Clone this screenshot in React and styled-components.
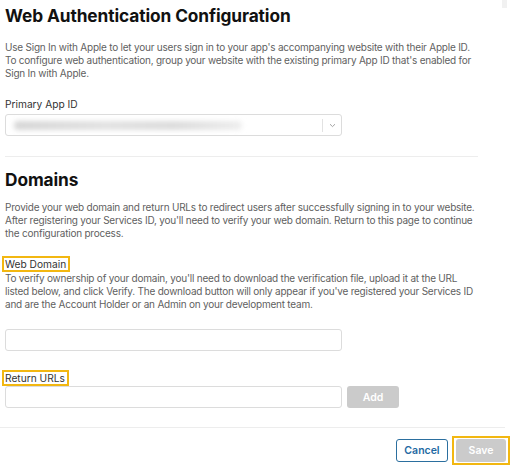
import React from "react";
import styled, { createGlobalStyle } from "styled-components";

const Global = createGlobalStyle`
  html, body { margin: 0; padding: 0; background: #fff; }
  body { font-family: Inter, "Liberation Sans", Arial, sans-serif; -webkit-font-smoothing: antialiased; }
  * { box-sizing: border-box; }
`;

const Page = styled.div`
  position: relative;
  width: 512px;
  height: 467px;
  overflow: hidden;
  background: #fff;
`;

const ScrollThumb = styled.div`
  position: absolute;
  top: 0;
  right: 5px;
  width: 5px;
  height: 8px;
  background: #f1f1f1;
`;

const Section = styled.section`
  padding: 0 0 0 5px;
  width: ${(p) => p.$w || 478}px;
`;

const Title = styled.h1`
  margin: 0;
  padding-top: ${(p) => p.$pt || 0}px;
  font-size: 17.3px;
  line-height: 22px;
  font-weight: 700;
  color: #111;
  letter-spacing: -0.1px;
`;

const Text = styled.p`
  margin: ${(p) => p.$mt || 0}px 0 0;
  font-size: 10px;
  line-height: 13px;
  letter-spacing: -0.22px;
  color: #5f5f5f;
`;

const Label = styled.div`
  margin-top: ${(p) => p.$mt || 0}px;
  font-size: 10.2px;
  line-height: 14px;
  color: #333;
`;

const Highlight = styled.div`
  display: inline-block;
  margin-top: ${(p) => p.$mt || 0}px;
  margin-left: -3px;
  padding: 0 2px 0 1px;
  border: 2px solid #f2b711;
  font-size: 10.2px;
  line-height: 12px;
  color: #333;
`;

const SelectBox = styled.div`
  margin-top: ${(p) => p.$mt || 0}px;
  width: 337px;
  height: 22px;
  border: 1px solid #dcdcdc;
  border-radius: 3px;
  display: flex;
  align-items: center;
  background: #fff;
`;

const Blurred = styled.div`
  flex: 1;
  height: 100%;
  position: relative;
  overflow: hidden;
  &::before {
    content: "";
    position: absolute;
    left: 8px;
    top: 6px;
    width: 228px;
    height: 9px;
    border-radius: 4px;
    background: linear-gradient(90deg, #d6d6d6, #e2e2e2 40%, #dcdcdc 70%, #eeeeee);
    filter: blur(2.5px);
  }
`;

const SelectSep = styled.div`
  width: 1px;
  height: 13px;
  background: #e2e2e2;
`;

const Chevron = styled.div`
  width: 18px;
  display: flex;
  justify-content: center;
  align-items: center;
`;

const Divider = styled.hr`
  margin: ${(p) => p.$mt || 0}px 0 0 ${(p) => p.$ml || 0}px;
  width: ${(p) => p.$w}px;
  height: 1px;
  border: 0;
  background: #ededed;
`;

const Input = styled.div`
  margin-top: ${(p) => p.$mt || 0}px;
  width: 337px;
  height: 22px;
  border: 1px solid #dcdcdc;
  border-radius: 3px;
  background: #fff;
`;

const Row = styled.div`
  display: flex;
  align-items: center;
  gap: 5px;
`;

const GrayButton = styled.div`
  width: ${(p) => p.$w || 52}px;
  height: ${(p) => p.$h || 22}px;
  border-radius: 3px;
  background: #cbcbcb;
  color: #fff;
  font-size: 10.5px;
  font-weight: 600;
  display: flex;
  align-items: center;
  justify-content: center;
`;

const Footer = styled.div`
  display: flex;
  justify-content: flex-end;
  align-items: center;
  gap: 4px;
  padding: 8px 2px 0 0;
`;

const OutlineButton = styled.div`
  width: 52px;
  height: 23px;
  border: 1px solid #2b6f9f;
  border-radius: 3px;
  color: #1f6aa3;
  font-size: 10.5px;
  font-weight: 600;
  display: flex;
  align-items: center;
  justify-content: center;
`;

const SaveFrame = styled.div`
  padding: 1px 2px;
  border: 2px solid #f2b711;
`;

export default function App() {
  return (
    <Page>
      <Global />
      <ScrollThumb />
      <Section $w={478}>
        <Title $pt={5}>Web Authentication Configuration</Title>
        <Text $mt={14}>
          Use Sign In with Apple to let your users sign in to your app's accompanying website with their Apple ID.
          To configure web authentication, group your website with the existing primary App ID that's enabled for
          Sign In with Apple.
        </Text>
        <Label $mt={17}>Primary App ID</Label>
        <SelectBox $mt={3}>
          <Blurred />
          <SelectSep />
          <Chevron>
            <svg width="7" height="5" viewBox="0 0 7 5">
              <path d="M1 1.2 L3.5 3.6 L6 1.2" fill="none" stroke="#999" strokeWidth="0.9" />
            </svg>
          </Chevron>
        </SelectBox>
      </Section>
      <Divider $mt={20} $ml={5} $w={473} />
      <Section $w={478}>
        <Title $pt={12}>Domains</Title>
        <Text $mt={10}>
          Provide your web domain and return URLs to redirect users after successfully signing in to your website.
          After registering your Services ID, you'll need to verify your web domain. Return to this page to continue
          the configuration process.
        </Text>
        <Highlight $mt={16}>Web Domain</Highlight>
        <Text $mt={0}>
          To verify ownership of your domain, you'll need to download the verification file, upload it at the URL
          listed below, and click Verify. The download button will only appear if you've registered your Services ID
          and are the Account Holder or an Admin on your development team.
        </Text>
        <Input $mt={18} />
        <Highlight $mt={19}>Return URLs</Highlight>
        <Row>
          <Input />
          <GrayButton $w={52}>Add</GrayButton>
        </Row>
      </Section>
      <Divider $mt={19} $w={505} />
      <Footer>
        <OutlineButton>Cancel</OutlineButton>
        <SaveFrame>
          <GrayButton $w={50} $h={23}>Save</GrayButton>
        </SaveFrame>
      </Footer>
    </Page>
  );
}
